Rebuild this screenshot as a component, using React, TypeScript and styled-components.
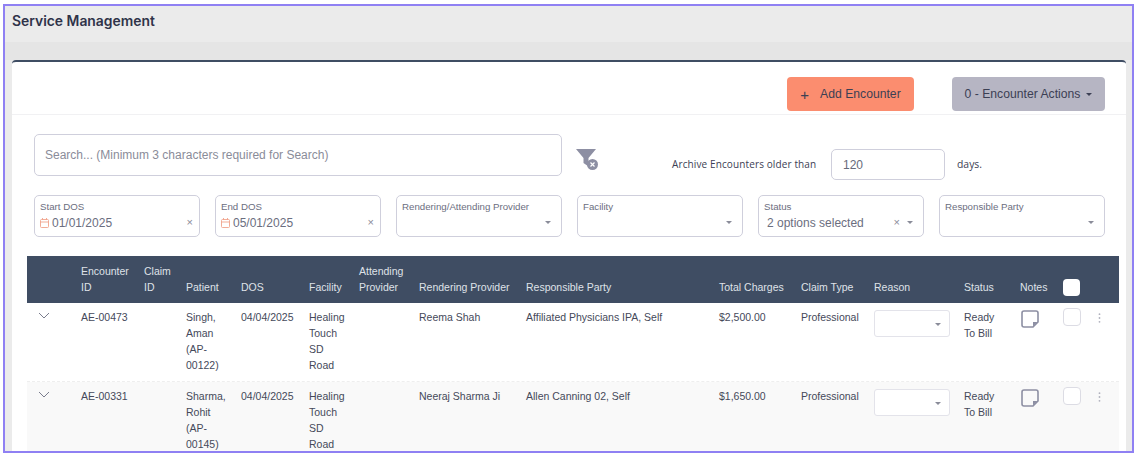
import React from "react";
import styled, { createGlobalStyle } from "styled-components";

const Global = createGlobalStyle`
  html, body { margin: 0; padding: 0; background: #fff; }
  body { font-family: "Inter", "Liberation Sans", sans-serif; color: #4a4f63; }
  * { box-sizing: border-box; }
`;

const Frame = styled.main`
  width: 1131px; height: 449px; margin: 4px 0 0 3px;
  border: 2px solid #8f80f3; background: #ebebeb; overflow: hidden;
  display: flex; flex-direction: column;
`;
const TitleBar = styled.header`
  height: 36px; padding: 6px 7px 0; flex: none;
`;
const Title = styled.h1`
  margin: 0; font: 600 13.9px/18px "Inter", sans-serif; color: #2f3349;
`;
const Strip = styled.div`
  height: 18px; background: #e5e5e5; flex: none;
`;
const Card = styled.section`
  margin: 0 6px 0 7px; background: #fff; border-top: 2px solid #3f4d63;
  border-radius: 4px 4px 0 0; flex: 1; min-height: 0;
`;
const Toolbar = styled.div`
  height: 53px; border-bottom: 1px solid #f1f1f3; display: flex; justify-content: flex-end;
  align-items: flex-start; padding: 15px 21px 0 0;
`;
const Btn = styled.button<{ $bg: string; $w: number; $ml?: number }>`
  width: ${p => p.$w}px; height: 34px; margin-left: ${p => p.$ml ?? 0}px; border: 0; border-radius: 4px;
  background: ${p => p.$bg}; color: #3c4054; font: 12.2px "Liberation Sans", sans-serif;
  display: flex; align-items: center; justify-content: center; padding: 0;
`;
const Plus = styled.span`
  font-size: 15px; margin-right: 11px; line-height: 1;
`;
const Caret = styled.i<{ $c?: string }>`
  display: inline-block; width: 0; height: 0; border: 3px solid transparent; border-bottom: 0;
  border-top: 3.5px solid ${p => p.$c ?? "#3c4054"};
`;
const BtnCaret = styled(Caret)`
  margin-left: 6px;
`;
const Body = styled.div`
  padding: 19px 21px 0 22px;
`;
const SearchRow = styled.div`
  display: flex; height: 46px;
`;
const Search = styled.div`
  width: 528px; height: 42px; border: 1px solid #cfcfdc; border-radius: 5px; padding: 0 10px;
  display: flex; align-items: center; font: 12px "Liberation Sans", sans-serif; color: #8a8c99;
`;
const FilterWrap = styled.div`
  width: 22px; height: 24px; margin: 15px 0 0 14px; flex: none;
`;
const ArchiveLabel = styled.span`
  margin: 23px 0 0 74px; font: 10px/14px "Open Sans", sans-serif; color: #3c4054; width: 159px; letter-spacing: .12px;
`;
const NumBox = styled.div`
  width: 114px; height: 31px; margin-top: 15px; border: 1px solid #cfcfdc; border-radius: 5px; padding-left: 11px;
  display: flex; align-items: center; font: 12px "Liberation Sans", sans-serif; color: #666a7a;
`;
const Days = styled.span`
  margin: 23px 0 0 12px; font: 10.4px/14px "Open Sans", sans-serif; color: #3c4054;
`;
const Filters = styled.div`
  display: grid; grid-template-columns: repeat(6, 166px); column-gap: 15px; margin-top: 15px; height: 42px;
`;
const Field = styled.div`
  position: relative; border: 1px solid #cfcfdc; border-radius: 5px; padding: 5px 5px 0; height: 42px;
`;
const FieldLabel = styled.div`
  font: 9.7px/12px "Liberation Sans", sans-serif; color: #6b6e80;
`;
const FieldValue = styled.div`
  display: flex; align-items: center; font: 12px/16px "Liberation Sans", sans-serif; color: #6b6e80; margin-top: 2px; height: 16px;
`;
const Cal = styled.svg`
  width: 9px; height: 10px; margin-right: 3px; flex: none;
`;
const Clear = styled.span`
  position: absolute; right: 6px; top: 20px; font: 11px/12px "Liberation Sans", sans-serif; color: #8a8c99;
`;
const SelCaret = styled.span`
  position: absolute; right: 10px; top: 25px; display: flex;
`;
const StatusValue = styled(FieldValue)`
  padding-left: 3px;
`;
const StatusClear = styled(Clear)`
  right: 23px;
`;
const Grid = "54px 63px 42px 55px 68px 50px 60px 107px 193px 82px 73px 90px 56px 43px 36px 20px";
const Table = styled.div`
  margin: 19px -14px 0 -7px; width: 1092px;
`;
const Head = styled.div`
  display: grid; grid-template-columns: ${Grid}; height: 47px; background: #3f4d63; align-items: end;
  font: 10.5px/16px "Liberation Sans", sans-serif; color: #dfe2e8; padding-bottom: 8px;
`;
const Row = styled.div<{ $alt?: boolean }>`
  display: grid; grid-template-columns: ${Grid}; height: 79px; background: ${p => (p.$alt ? "#f9f9f9" : "#fff")};
  border-bottom: 1px dashed #eeeeee; padding-top: 6px;
  font: 10.5px/16px "Liberation Sans", sans-serif; color: #45495a;
`;
const Chevron = styled.svg`
  width: 12px; height: 7px; margin: 3px 0 0 11px;
`;
const Sel = styled.div`
  position: relative; width: 76px; height: 27px; margin-top: 1px; background: #fff; border: 1px solid #e3e3ea; border-radius: 3px;
`;
const RowSelCaret = styled.span`
  position: absolute; right: 8px; top: 12px; display: flex;
`;
const HeadCheck = styled.span`
  width: 17px; height: 17px; background: #fff; border-radius: 4px; display: block; margin-bottom: -1px;
`;
const Check = styled.span`
  width: 18px; height: 18px; margin-top: -1px; border: 1px solid #dcdce4; border-radius: 4px; display: block; background: #fff;
`;
const Note = styled.svg`
  width: 18px; height: 18px; margin: 1px 0 0 1px; display: block;
`;
const Dots = styled.svg`
  width: 3px; height: 10px; margin: 4px 0 0 -1px; display: block;
`;

const Calendar = () => (
  <Cal viewBox="0 0 9 10" fill="none" stroke="#f0a48c" strokeWidth=".9">
    <rect x=".5" y="1.5" width="8" height="8" rx="1" />
    <path d="M.5 4h8M2.5 0v2M6.5 0v2" />
  </Cal>
);
const Filter = () => (
  <svg width="22" height="24" viewBox="0 0 22 24" style={{ display: "block" }}>
    <path d="M0 0h20l-7.5 9v8.5L7.5 14V9z" fill="#8d8fa3" />
    <circle cx="16.5" cy="15.5" r="5.5" fill="#8d8fa3" />
    <path d="M14.5 13.5l4 4M18.5 13.5l-4 4" stroke="#fff" strokeWidth="1.2" />
  </svg>
);
const NoteIcon = () => (
  <Note viewBox="0 0 18 18" fill="none">
    <path d="M3 1h12a2 2 0 0 1 2 2v9l-5 5H3a2 2 0 0 1-2-2V3a2 2 0 0 1 2-2z" stroke="#8d8fa3" strokeWidth="1.6" />
    <path d="M16.5 12H12v4.5z" fill="#8d8fa3" />
  </Note>
);
const rows = [
  { id: "AE-00473", p: ["Singh,", "Aman", "(AP-", "00122)"], r: "Reema Shah", party: "Affiliated Physicians IPA, Self", c: "$2,500.00" },
  { id: "AE-00331", p: ["Sharma,", "Rohit", "(AP-", "00145)"], r: "Neeraj Sharma Ji", party: "Allen Canning 02, Self", c: "$1,650.00" },
];
const selects = ["Rendering/Attending Provider", "Facility"];

export default function App() {
  return (
    <>
      <Global />
      <Frame>
        <TitleBar><Title>Service Management</Title></TitleBar>
        <Strip />
        <Card>
          <Toolbar>
            <Btn $bg="#fb8d6f" $w={127}><Plus>+</Plus>Add Encounter</Btn>
            <Btn $bg="#b6b5c3" $w={153} $ml={38}>0 - Encounter Actions<BtnCaret /></Btn>
          </Toolbar>
          <Body>
            <SearchRow>
              <Search>Search... (Minimum 3 characters required for Search)</Search>
              <FilterWrap><Filter /></FilterWrap>
              <ArchiveLabel>Archive Encounters older than</ArchiveLabel>
              <NumBox>120</NumBox>
              <Days>days.</Days>
            </SearchRow>
            <Filters>
              <Field>
                <FieldLabel>Start DOS</FieldLabel>
                <FieldValue><Calendar />01/01/2025</FieldValue>
                <Clear>×</Clear>
              </Field>
              <Field>
                <FieldLabel>End DOS</FieldLabel>
                <FieldValue><Calendar />05/01/2025</FieldValue>
                <Clear>×</Clear>
              </Field>
              {selects.map(s => (
                <Field key={s}>
                  <FieldLabel>{s}</FieldLabel>
                  <SelCaret><Caret $c="#8a8c99" /></SelCaret>
                </Field>
              ))}
              <Field>
                <FieldLabel>Status</FieldLabel>
                <StatusValue>2 options selected</StatusValue>
                <StatusClear>×</StatusClear>
                <SelCaret><Caret $c="#8a8c99" /></SelCaret>
              </Field>
              <Field>
                <FieldLabel>Responsible Party</FieldLabel>
                <SelCaret><Caret $c="#8a8c99" /></SelCaret>
              </Field>
            </Filters>
            <Table>
              <Head>
                <span />
                <span>Encounter<br />ID</span>
                <span>Claim<br />ID</span>
                <span>Patient</span>
                <span>DOS</span>
                <span>Facility</span>
                <span>Attending<br />Provider</span>
                <span>Rendering Provider</span>
                <span>Responsible Party</span>
                <span>Total Charges</span>
                <span>Claim Type</span>
                <span>Reason</span>
                <span>Status</span>
                <span>Notes</span>
                <HeadCheck />
                <span />
              </Head>
              {rows.map((r, i) => (
                <Row key={r.id} $alt={i === 1}>
                  <Chevron viewBox="0 0 12 7" fill="none" stroke="#6b6e80" strokeWidth=".9"><path d="M1 1l5 5 5-5" /></Chevron>
                  <span>{r.id}</span>
                  <span />
                  <span>{r.p.map(l => <div key={l}>{l}</div>)}</span>
                  <span>04/04/2025</span>
                  <span><div>Healing</div><div>Touch</div><div>SD</div><div>Road</div></span>
                  <span />
                  <span>{r.r}</span>
                  <span>{r.party}</span>
                  <span>{r.c}</span>
                  <span>Professional</span>
                  <Sel><RowSelCaret><Caret $c="#8a8c99" /></RowSelCaret></Sel>
                  <span>Ready<br />To Bill</span>
                  <NoteIcon />
                  <Check />
                  <Dots viewBox="0 0 3 10" fill="#b0b1bd"><circle cx="1.5" cy="1.2" r=".9" /><circle cx="1.5" cy="5" r=".9" /><circle cx="1.5" cy="8.8" r=".9" /></Dots>
                </Row>
              ))}
            </Table>
          </Body>
        </Card>
      </Frame>
    </>
  );
}
